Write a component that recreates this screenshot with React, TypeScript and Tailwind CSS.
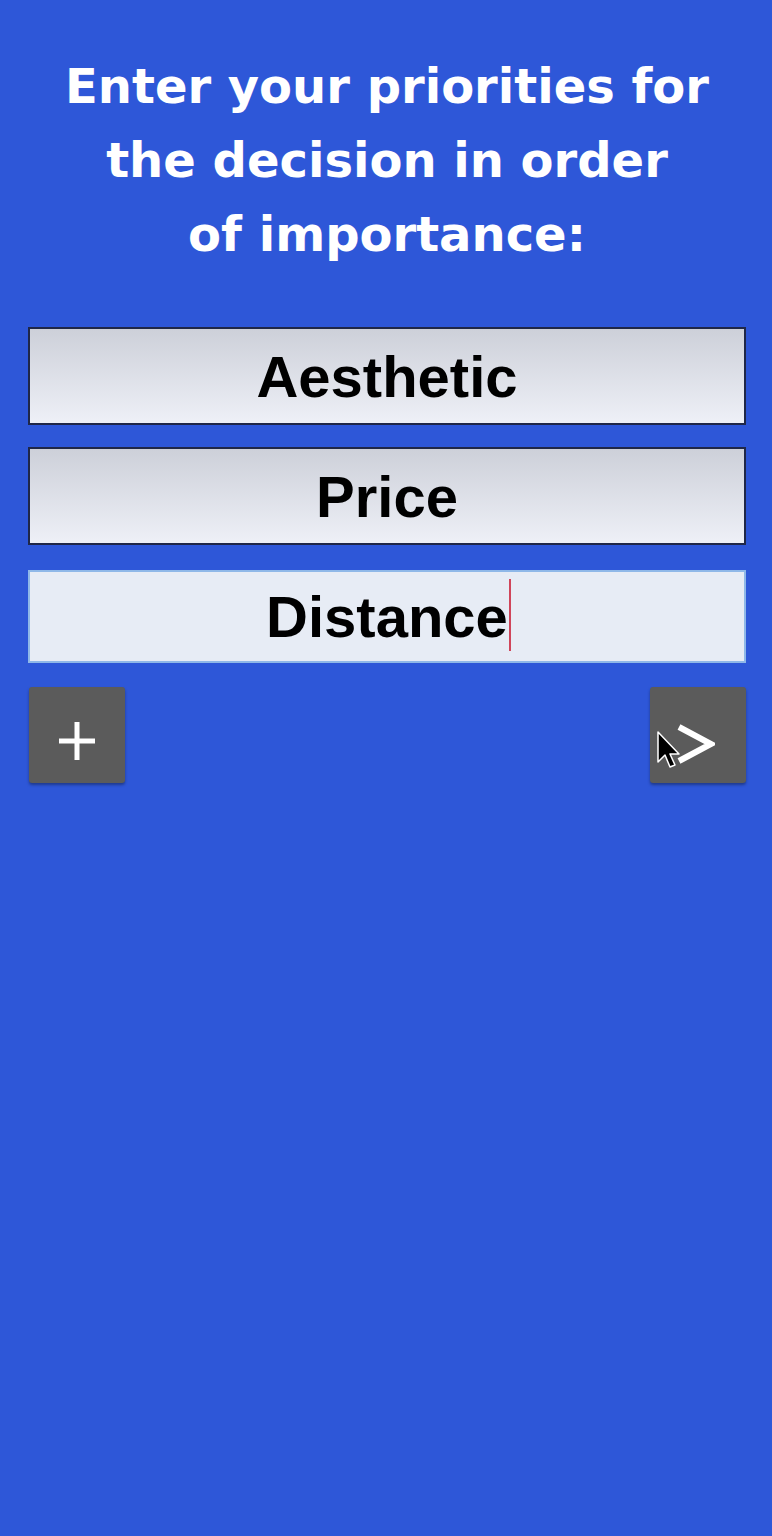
export default function App() {
  const priorities = ["Aesthetic", "Price"];

  return (
    <div className="min-h-[1536px] w-full bg-[#2e57d8] pl-[28px] pr-[26px] pt-[49px]">
      <h1 className="text-center font-['DejaVu_Sans',sans-serif] text-[48px] font-bold leading-[74px] text-white">
        Enter your priorities for
        <br />
        the decision in order
        <br />
        of importance:
      </h1>

      <div className="mt-[56px] flex flex-col">
        {priorities.map((p, i) => (
          <div
            key={p}
            className={`flex h-[98px] items-center justify-center border-2 border-[#1f2748] bg-gradient-to-b from-[#cdd0d9] to-[#eef0f7] ${i > 0 ? "mt-[22px]" : ""}`}
          >
            <span className="font-['Liberation_Sans',Arial,sans-serif] text-[58px] font-bold text-black">
              {p}
            </span>
          </div>
        ))}

        {/* focused input */}
        <div className="mt-[25px] flex h-[93px] items-center justify-center border-2 border-[#8fb8e8] bg-[#e7ecf5]">
          <span className="relative font-['Liberation_Sans',Arial,sans-serif] text-[58px] font-bold text-black">
            Distance
            <span className="absolute right-[-3px] top-[6px] h-[72px] w-[2px] bg-[#d0455a]" />
          </span>
        </div>
      </div>

      <div className="mt-[24px] flex items-start justify-between pl-[1px]">
        <button className="flex h-[96px] w-[96px] items-center justify-center rounded-[3px] bg-[#5b5b5b] shadow-[0_2px_3px_rgba(0,0,0,0.35)]">
          <svg width="36" height="38" viewBox="0 0 36 38" className="mt-[12px]">
            <path d="M18 0 V38 M0 19 H36" stroke="white" strokeWidth="5" />
          </svg>
        </button>
        <button className="relative flex h-[96px] w-[96px] items-center justify-center rounded-[3px] bg-[#5b5b5b] shadow-[0_2px_3px_rgba(0,0,0,0.35)]">
          <svg width="40" height="42" viewBox="0 0 40 42" className="mr-[6px] mt-[18px]">
            <path d="M4 4 L36 21 L4 38" stroke="white" strokeWidth="6" fill="none" strokeLinejoin="miter" />
          </svg>
          <svg
            width="26"
            height="40"
            viewBox="0 0 26 40"
            className="absolute left-[6px] top-[43px]"
          >
            <path
              d="M2 2 L2 32 L9 25 L14 37 L19 35 L14 24 L23 24 Z"
              fill="black"
              stroke="white"
              strokeWidth="1.5"
              strokeLinejoin="round"
            />
          </svg>
        </button>
      </div>
    </div>
  );
}
